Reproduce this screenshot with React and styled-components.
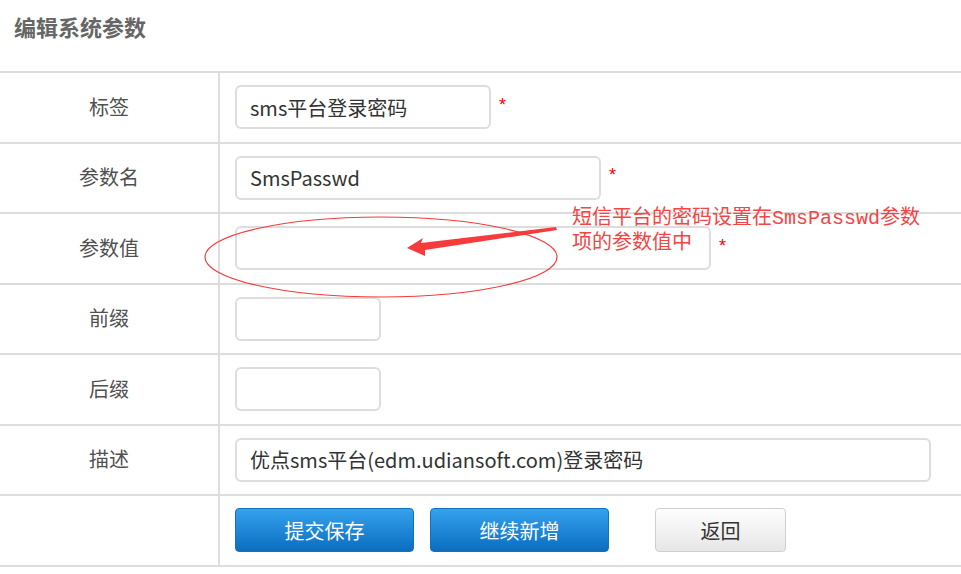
import React, { useState } from 'react';
import styled, { createGlobalStyle, css } from 'styled-components';

const GlobalStyle = createGlobalStyle`
  html, body {
    margin: 0;
    padding: 0;
    background: #fff;
  }
  body {
    font-family: "Noto Sans CJK SC", "Noto Sans", sans-serif;
    color: #333;
  }
`;

const Page = styled.div`
  position: relative;
  width: 961px;
  height: 574px;
  overflow: hidden;
`;

const Title = styled.h2`
  margin: 0;
  height: 71px;
  box-sizing: border-box;
  padding: 11px 0 0 14px;
  font-size: 22px;
  line-height: 30px;
  font-weight: bold;
  color: #666;
`;

const Table = styled.div`
  border-top: 2px solid #dddddd;
`;

const Row = styled.div`
  display: flex;
  height: 68.5px;
  border-bottom: 2px solid #dddddd;
`;

const Label = styled.div`
  width: 220px;
  flex-shrink: 0;
  box-sizing: border-box;
  border-right: 2px solid #dddddd;
  display: flex;
  align-items: center;
  justify-content: center;
  padding-bottom: 2px;
  font-size: 20px;
  color: #505050;
`;

const Cell = styled.div`
  flex: 1;
  display: flex;
  align-items: center;
  padding-left: 15px;
`;

const Input = styled.input`
  width: ${(p) => p.$w}px;
  height: 44px;
  box-sizing: border-box;
  border: 2px solid #dddddd;
  border-radius: 6px;
  padding: 0 13px;
  font-family: "Noto Sans CJK SC", "Noto Sans", sans-serif;
  font-size: 20px;
  color: #333;
  outline: none;
  background: #fff;
`;

const Required = styled.span`
  align-self: center;
  margin: -4px 0 0 8px;
  color: #f00;
  font-size: 18px;
  font-family: "Liberation Sans", sans-serif;
`;

const Buttons = styled.div`
  display: flex;
  align-items: center;
  gap: 16px;
`;

const Button = styled.button`
  height: 44px;
  width: ${(p) => p.$w}px;
  border-radius: 4px;
  font-family: "Noto Sans CJK SC", "Noto Sans", sans-serif;
  font-size: 20px;
  cursor: pointer;
  ${(p) =>
    p.$plain
      ? css`
          margin-left: 30px;
          color: #333;
          border: 1px solid #cfcfcf;
          background: linear-gradient(#fefefe, #e6e6e6);
        `
      : css`
          color: #fff;
          border: 1px solid #1670bd;
          background: linear-gradient(#35a2ee, #0b6dc0);
        `}
`;

const Overlay = styled.svg`
  position: absolute;
  left: 0;
  top: 0;
  pointer-events: none;
`;

const Note = styled.div`
  position: absolute;
  left: 572px;
  top: 206px;
  font-family: "Liberation Mono", "Noto Sans CJK SC", monospace;
  font-size: 20px;
  line-height: 25px;
  color: #f54444;
  white-space: nowrap;
`;

const fields = [
  { label: '标签', value: 'sms平台登录密码', w: 256, req: true },
  { label: '参数名', value: 'SmsPasswd', w: 366, req: true },
  { label: '参数值', value: '', w: 476, req: true },
  { label: '前缀', value: '', w: 146 },
  { label: '后缀', value: '', w: 146 },
  { label: '描述', value: '优点sms平台(edm.udiansoft.com)登录密码', w: 696 },
];

const App = () => {
  const [values, setValues] = useState(fields.map((f) => f.value));

  const update = (i, v) => {
    const next = [...values];
    next[i] = v;
    setValues(next);
  };

  return (
    <Page>
      <GlobalStyle />
      <Title>编辑系统参数</Title>
      <Table>
        {fields.map((f, i) => (
          <Row key={f.label}>
            <Label>{f.label}</Label>
            <Cell>
              <Input $w={f.w} value={values[i]} onChange={(e) => update(i, e.target.value)} />
              {f.req && <Required>*</Required>}
            </Cell>
          </Row>
        ))}
        <Row>
          <Label />
          <Cell>
            <Buttons>
              <Button $w={179}>提交保存</Button>
              <Button $w={179}>继续新增</Button>
              <Button $w={131} $plain>返回</Button>
            </Buttons>
          </Cell>
        </Row>
      </Table>

      {/* red annotation drawn over the form */}
      <Overlay width="961" height="574" viewBox="0 0 961 574">
        <ellipse cx="381" cy="257" rx="176" ry="40" fill="none" stroke="#f53b3b" strokeWidth="1.2" />
        <polygon
          points="407,248 423,238 421,243 556,227 557,230 425,250 425,256"
          fill="#f53b3b"
        />
      </Overlay>
      <Note>
        短信平台的密码设置在SmsPasswd参数
        <br />
        项的参数值中
      </Note>
    </Page>
  );
};

export default App;
